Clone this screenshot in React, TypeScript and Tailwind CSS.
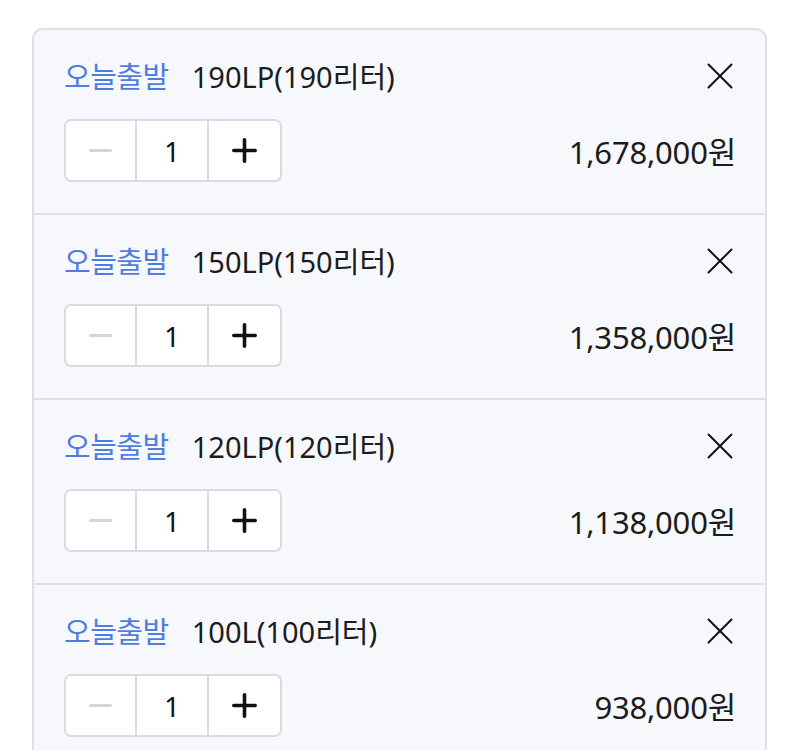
import React from "react";

const items = [
  { name: "190LP(190리터)", price: "1,678,000원" },
  { name: "150LP(150리터)", price: "1,358,000원" },
  { name: "120LP(120리터)", price: "1,138,000원" },
  { name: "100L(100리터)", price: "938,000원" },
];

function Row({ name, price }: { name: string; price: string }) {
  return (
    <div className="pl-[30px] pr-[29px] pt-[28px] pb-[31px]">
      <div className="flex h-[36px] items-center justify-between">
        <div className="flex items-center text-[29px] leading-none">
          <span className="tracking-[-0.5px] text-[#4f7ddf]">오늘출발</span>
          <span className="ml-[23px] tracking-[0px] text-[#1c1c1c]">{name}</span>
        </div>
        <svg width="26" height="26" viewBox="0 0 26 26" className="mr-[3px]">
          <path d="M1.5 1.5 L24.5 24.5 M24.5 1.5 L1.5 24.5" stroke="#111" strokeWidth="2" strokeLinecap="round" />
        </svg>
      </div>
      <div className="mt-[25px] flex items-center justify-between">
        <div className="flex h-[63px] w-[218px] overflow-hidden rounded-[7px] border-2 border-[#d8dce2] bg-white">
          <div className="flex w-[71px] items-center justify-center border-r-2 border-[#d8dce2]">
            <div className="h-[3px] w-[23px] rounded-full bg-[#d2d5da]" />
          </div>
          <div className="flex w-[72px] items-center justify-center border-r-2 border-[#d8dce2] text-[28px] text-[#111]">
            1
          </div>
          <div className="flex flex-1 items-center justify-center">
            <svg width="25" height="25" viewBox="0 0 25 25">
              <path d="M12.5 1.8 V23.2 M1.8 12.5 H23.2" stroke="#111" strokeWidth="3.6" strokeLinecap="round" />
            </svg>
          </div>
        </div>
        <div className="pt-[4px] text-[31px] leading-none tracking-[-0.2px] text-[#1c1c1c]">{price}</div>
      </div>
    </div>
  );
}

export default function App() {
  return (
    <div
      className="min-h-[750px] bg-white pt-[28px] pl-[32px] pr-[34px]"
      style={{ fontFamily: '"Noto Sans", "Noto Sans CJK KR", sans-serif' }}
    >
      <div className="overflow-hidden rounded-[11px] border-2 border-[#dde1e7] bg-[#f6f8fc] divide-y-2 divide-[#dde1e7]">
        {items.map((it) => (
          <Row key={it.name} {...it} />
        ))}
      </div>
    </div>
  );
}
